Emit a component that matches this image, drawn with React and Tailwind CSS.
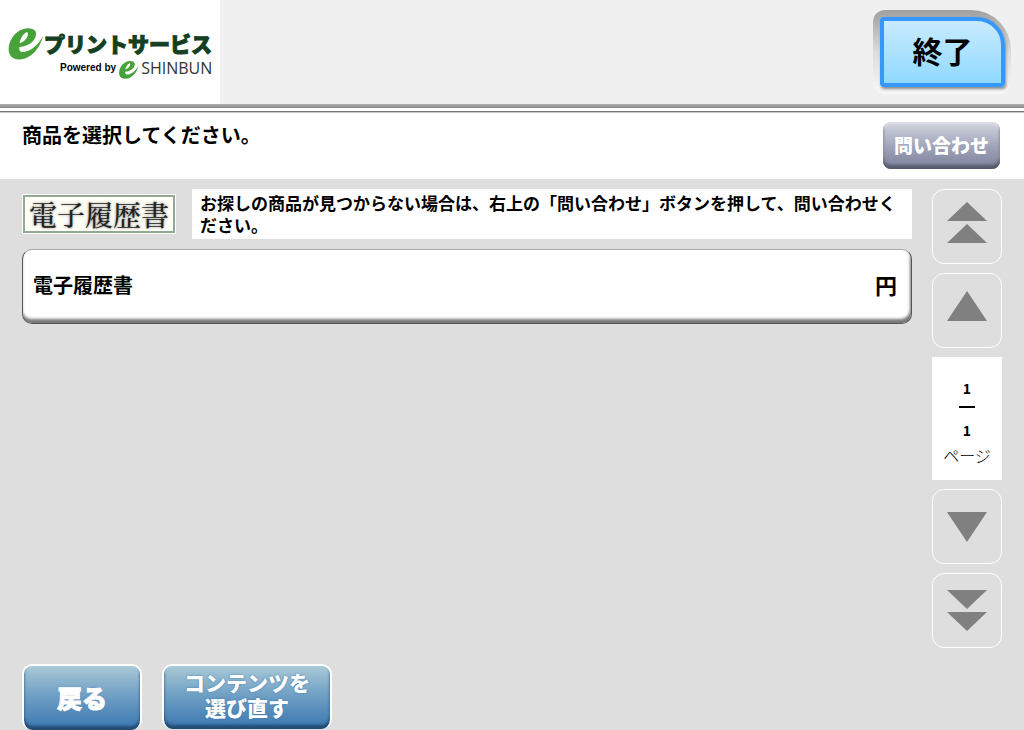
import React, { useState } from 'react'

const BrandMark = ({ className }) => (
  <svg viewBox="0 0 35 32" className={className} aria-hidden="true">
    <path
      fill="#48a23a"
      fillRule="evenodd"
      d="M34.500 8.500C32 18 24 31 11 31.500C4 31.500 -.5 27 .2 20C.8 10 9 .5 19.500 .2C26.500 .2 29 4 27 9C25 14.500 18.500 18.500 11 19C10.200 22.500 12 24.500 15.500 24C23 23 30 16 34.500 8.500ZM11 15.200C15 14.500 18.800 10.500 19.500 6.500C19.800 4.700 18.800 4 17.500 4.500C14.500 5.800 12 11 11 15.200Z"
    />
  </svg>
)

const Logo = () => (
  <div className="flex w-[220px] flex-col bg-white pt-7 pl-2 text-[#143f22]">
    <div className="flex items-start">
      <BrandMark className="h-8 w-9" />
      <span className="text-[21px] leading-[30px] font-black whitespace-nowrap [-webkit-text-stroke:1px_#143f22]">プリントサービス</span>
    </div>
    <div className="flex items-start pl-[52px]">
      <span className="font-['Liberation_Sans'] text-[10px] leading-4 font-bold whitespace-nowrap text-black">Powered by</span>
      <BrandMark className="ml-[3px] h-5 w-5" />
      <span className="ml-[2px] font-['Open_Sans'] text-base leading-4 whitespace-nowrap text-[#333]">SHINBUN</span>
    </div>
  </div>
)

const arrows = {
  first: ['M20 0L40 19H0Z', 'M20 22L40 41H0Z'],
  prev: ['M20 5L40 35H0Z'],
  next: ['M0 10H40L20 40Z'],
  last: ['M0 4H40L20 23Z', 'M0 26H40L20 45Z']
}

const PagerButton = ({ type, label, onClick }) => (
  <button
    type="button"
    aria-label={label}
    onClick={onClick}
    className="flex h-[75px] w-full items-center justify-center rounded-xl border border-white pb-[2px]"
  >
    <svg viewBox="0 0 40 48" className="h-12 w-10" fill="#808080" aria-hidden="true">
      {arrows[type].map((d) => <path key={d} d={d} />)}
    </svg>
  </button>
)

const products = [{ id: 1, name: '電子履歴書', price: '' }]

const App = () => {
  const [page, setPage] = useState(1)
  const totalPages = 1

  return (
    <div className="flex min-h-screen flex-col bg-[#dedede] font-['Noto_Sans_CJK_JP',sans-serif] text-black">
      {/* Header */}
      <header className="flex h-26 justify-between bg-[#f0f0f0]">
        <Logo />
        <div className="mt-[10px] mr-[13px] h-[84px] w-[138px] rounded-xl rounded-tr-[40px] bg-linear-to-b from-[#a0a0a0] via-[#dcdcdc] to-[#f8f8f8] p-[7px]">
          <button
            type="button"
            className="h-[70px] w-[125px] rounded-sm rounded-tr-[28px] border-4 border-[#3598ff] bg-linear-to-b from-[#c8ebff] to-[#8fd9ff] pb-1 text-3xl font-bold shadow-[1px_2px_3px_#888]"
          >
            終了
          </button>
        </div>
      </header>
      <div className="h-1 bg-linear-to-b from-[#b0b0b0] to-[#888888]" />
      <div className="h-[3px] bg-white" />
      <div className="h-[2px] border-t border-[#777777] bg-[#c8c8c8]" />

      {/* Message */}
      <div className="flex h-[66px] items-start justify-between bg-white pt-[9px] pr-6 pl-[22px]">
        <h1 className="text-xl leading-[26px] font-bold">商品を選択してください。</h1>
        <button
          type="button"
          className="h-[47px] w-[117px] rounded-lg bg-linear-to-b from-[#d4d6df] via-[#a2a6ba] to-[#7c819b] pb-px text-[19px] font-black text-white shadow-[inset_0_-4px_3px_#555b6c,inset_0_2px_2px_#dddfe6]"
        >
          問い合わせ
        </button>
      </div>

      <main className="flex gap-5 px-[22px] pt-[10px]">
        <section className="flex min-w-0 flex-1 flex-col gap-[10px]">
          <div className="flex items-center gap-4">
            <div className="flex h-10 w-[154px] shrink-0 items-center justify-center border border-white bg-[#fffff5] font-['Noto_Serif_CJK_JP','Noto_Sans_CJK_JP',serif] text-[28px] leading-8 font-medium text-[#222] ring-2 ring-[#91a996] ring-inset [text-shadow:0_0_3px_#777]">
              電子履歴書
            </div>
            <p className="min-h-[50px] flex-1 bg-white px-2 py-[3px] text-[17px] leading-[22px] font-bold">
              お探しの商品が見つからない場合は、右上の「問い合わせ」ボタンを押して、問い合わせください。
            </p>
          </div>
          {products.map((product) => (
            <button
              key={product.id}
              type="button"
              className="flex h-[75px] items-center justify-between rounded-[10px] border border-[#555] border-t-[#aaa] bg-white px-[10px] pb-1 text-xl font-bold shadow-[inset_-1px_-4px_3px_#777]"
            >
              <span>{product.name}</span>
              <span className="pr-1 text-[22px]">{product.price}円</span>
            </button>
          ))}
        </section>

        {/* Pager */}
        <nav className="flex w-[70px] flex-col gap-[9px]">
          <PagerButton type="first" label="最初のページ" onClick={() => setPage(1)} />
          <PagerButton type="prev" label="前のページ" onClick={() => setPage(Math.max(1, page - 1))} />
          <div className="flex h-[123px] flex-col items-center bg-white pt-5 text-sm leading-[22px] font-bold">
            <span>{page}</span>
            <span className="my-[7px] h-[2px] w-4 bg-black" />
            <span className="mt-1">{totalPages}</span>
            <span className="mt-[3px] text-base leading-[22px] font-light">ページ</span>
          </div>
          <PagerButton type="next" label="次のページ" onClick={() => setPage(Math.min(totalPages, page + 1))} />
          <PagerButton type="last" label="最後のページ" onClick={() => setPage(totalPages)} />
        </nav>
      </main>

      {/* Footer */}
      <footer className="flex items-start gap-5 px-[22px] pt-4">
        <button
          type="button"
          className="h-[66px] w-[120px] rounded-[10px] border-2 border-b-0 border-white bg-linear-to-b from-[#a9c9d6] via-[#6b9cc3] to-[#3a77b0] text-[25px] font-black text-white shadow-[inset_0_-4px_3px_#234b73] [-webkit-text-stroke:1px_white] [text-shadow:0_0_2px_#3a77b0]"
        >
          戻る
        </button>
        <button
          type="button"
          className="h-[65px] w-[170px] rounded-[10px] border-2 border-b-0 border-white bg-linear-to-b from-[#a9c9d6] via-[#6b9cc3] to-[#3a77b0] pb-[5px] text-[21px] leading-[25px] font-black text-white shadow-[inset_0_-4px_3px_#234b73] [text-shadow:0_0_2px_#3a77b0]"
        >
          コンテンツを<br />選び直す
        </button>
      </footer>
    </div>
  )
}

export default App
